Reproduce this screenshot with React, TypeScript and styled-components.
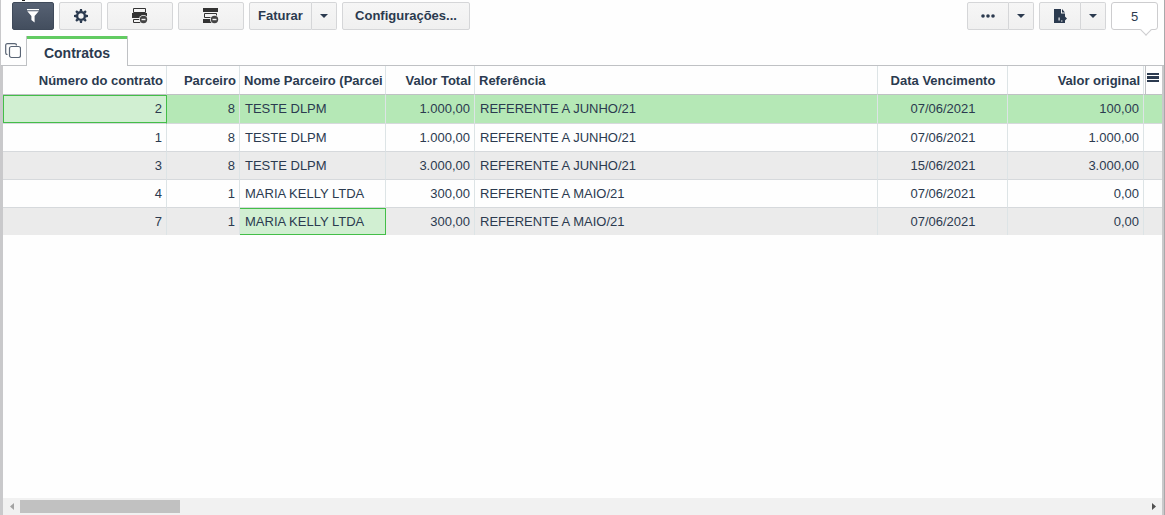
import React from "react";
import styled, { createGlobalStyle, css } from "styled-components";

const ink = "#2b3a4f";
const line = "#bfc1c4";
const cellLine = "#dde4e6";
const green = "#43be48";

const GlobalStyle = createGlobalStyle`
  *, *::before, *::after { box-sizing: border-box; }
  body {
    margin: 0;
    background: #fefefe;
    color: ${ink};
    font: 13px/16px "Liberation Sans", Arial, sans-serif;
  }
`;

const Page = styled.main`
  display: flex;
  flex-direction: column;
  min-height: 100vh;
  border-left: 1px solid #c9c9cb;
  border-right: 1px solid #a9a9ab;
`;

const Toolbar = styled.header`
  position: relative;
  display: flex;
  justify-content: space-between;
  padding: 2px 6px 6px 11px;

  &::before {
    content: "";
    position: absolute;
    top: 0;
    left: 21px;
    width: 3px;
    height: 1px;
    background: #222;
  }
`;

const Group = styled.div`
  display: flex;
  gap: 5px;
`;

const Split = styled.div`
  display: flex;
`;

const Button = styled.button<{ $width: number; $side?: "left" | "right"; $dark?: boolean }>`
  display: flex;
  align-items: center;
  justify-content: center;
  width: ${(p) => p.$width}px;
  height: 28px;
  padding: 0;
  border: 1px solid #d5d6d8;
  border-radius: 2px;
  background: linear-gradient(#f6f6f6, #f0f0f0);
  color: ${ink};
  font: bold 13px/16px "Liberation Sans", Arial, sans-serif;
  cursor: pointer;

  ${(p) => p.$side === "left" && css`border-radius: 2px 0 0 2px;`}
  ${(p) => p.$side === "right" && css`
    border-left: 0;
    border-radius: 0 2px 2px 0;
  `}
  ${(p) => p.$dark && css`
    border-color: #3f4a5a;
    background: linear-gradient(#566173, #434e5e);
    color: #fff;
  `}
`;

const Count = styled.output`
  position: relative;
  width: 47px;
  height: 28px;
  border: 1px solid #cdcdcf;
  border-radius: 3px;
  background: #fff;
  line-height: 27px;
  text-align: center;

  &::after {
    content: "";
    position: absolute;
    right: 7px;
    bottom: -5px;
    width: 8px;
    height: 8px;
    border: solid #cdcdcf;
    border-width: 0 1px 1px 0;
    background: #fff;
    transform: rotate(45deg);
  }
`;

const Tabs = styled.nav`
  display: flex;
  height: 30px;
  border-bottom: 1px solid ${line};
`;

const CopyButton = styled.button`
  display: flex;
  align-items: center;
  justify-content: center;
  width: 25px;
  padding: 0 2px 0 0;
  border: 0;
  background: none;
  color: #5a6575;
`;

const Tab = styled.button`
  width: 102px;
  height: 30px;
  padding: 3px 0 0;
  border: solid ${line};
  border-width: 0 1px;
  background: linear-gradient(#62cb62 3px, #fefefe 3px);
  color: ${ink};
  font: bold 14px/16px "Liberation Sans", Arial, sans-serif;
`;

const Grid = styled.section`
  display: flex;
  flex: 1;
  flex-direction: column;
  border-left: 2px solid #c9c9cb;
  border-right: 2px solid #c9c9cb;
`;

const Table = styled.table`
  width: 100%;
  border-collapse: separate;
  border-spacing: 0;
  table-layout: fixed;
`;

type Align = "left" | "center" | "right";

const HeadCell = styled.th<{ $align: Align }>`
  height: 29px;
  padding: 2px 3px 0 4px;
  overflow: hidden;
  border-right: 1px solid ${cellLine};
  border-bottom: 1px solid ${line};
  text-align: ${(p) => p.$align};
  white-space: nowrap;
`;

const MenuCell = styled.th`
  padding: 0 0 0 1px;
  border-bottom: 1px solid ${line};
`;

const MenuButton = styled.button`
  display: flex;
  justify-content: center;
  width: 100%;
  height: 28px;
  padding: 0 2px 4px 0;
  align-items: center;
  border: 0;
  border-left: 1px solid ${line};
  background: none;
  color: ${ink};
`;

const Row = styled.tr<{ $active: boolean }>`
  height: ${(p) => (p.$active ? 29 : 28)}px;
  background: ${(p) => (p.$active ? "#b5e8b6" : "#fefefe")};

  &:nth-child(odd) {
    background: ${(p) => (p.$active ? "#b5e8b6" : "#ebebeb")};
  }
  &:last-child {
    height: 27px;
  }
  &:last-child td {
    border-bottom: 0;
  }
`;

const Cell = styled.td<{ $align: Align; $marked?: boolean }>`
  padding: 0 4px 0 5px;
  overflow: hidden;
  border-right: 1px solid ${cellLine};
  border-bottom: 1px solid #d6d9dc;
  text-align: ${(p) => p.$align};
  white-space: nowrap;

  &:last-child {
    border-right: 0;
  }
  ${(p) => p.$marked && css`
    border-right-color: ${green};
    background: #d1efd2;
    box-shadow: inset 0 1px ${green}, inset 0 -1px ${green};

    &:first-child {
      box-shadow: inset 1px 1px ${green}, inset 0 -1px ${green};
    }
  `}
`;

const Scrollbar = styled.div`
  display: flex;
  align-items: center;
  height: 17px;
  margin-top: auto;
  background: #f1f1f1;
`;

const Arrow = styled.button`
  display: flex;
  align-items: center;
  justify-content: center;
  width: 17px;
  height: 17px;
  padding: 0;
  border: 0;
  background: none;
`;

const Track = styled.div`
  flex: 1;
`;

const Thumb = styled.div`
  width: 160px;
  height: 13px;
  background: #c1c1c1;
`;

const Caret = () => (
  <svg width="8" height="4" viewBox="0 0 8 4" aria-hidden="true">
    <path d="M0 0h8L4 4z" fill="currentColor" />
  </svg>
);

const FilterIcon = () => (
  <svg width="14" height="14" viewBox="0 0 14 14" fill="currentColor" aria-hidden="true">
    <path d="M1 0h12v1.3H1zM1.3 2.2h11.4L8.6 7v6.6L5.4 11V7z" />
  </svg>
);

const GearIcon = () => (
  <svg width="14" height="14" viewBox="0 0 14 14" aria-hidden="true">
    <circle cx="7" cy="7" r="3.9" fill="none" stroke="currentColor" strokeWidth="2.4" />
    {[0, 45, 90, 135, 180, 225, 270, 315].map((angle) => (
      <path key={angle} d="M6 0h2l.4 2.4H5.6z" fill="currentColor" transform={`rotate(${angle} 7 7)`} />
    ))}
  </svg>
);

const MinusBadge = () => (
  <>
    <circle cx="11.5" cy="11.5" r="4.5" fill="#f3f3f3" />
    <circle cx="11.5" cy="11.5" r="3.7" fill="#444" />
    <path d="M9.5 11.5h4" stroke="#f3f3f3" strokeWidth="1.4" />
  </>
);

const RemoveLineIcon = () => (
  <svg width="16" height="16" viewBox="0 0 16 16" aria-hidden="true">
    <path d="M1.5.5h12v4h-12zM1.5 11.5h12v3h-12z" fill="none" stroke="#333" />
    <path d="M0 5h15v5H0z" fill="#333" />
    <MinusBadge />
  </svg>
);

const RemoveHeadIcon = () => (
  <svg width="16" height="16" viewBox="0 0 16 16" aria-hidden="true">
    <path d="M0 0h15v4H0zM0 11h10v4H0z" fill="#333" />
    <path d="M1.5 5.5h12v4h-12z" fill="none" stroke="#333" />
    <MinusBadge />
  </svg>
);

const DotsIcon = () => (
  <svg width="14" height="4" viewBox="0 0 14 4" fill="currentColor" aria-hidden="true">
    <circle cx="2" cy="2" r="1.8" />
    <circle cx="7" cy="2" r="1.8" />
    <circle cx="12" cy="2" r="1.8" />
  </svg>
);

const ExportIcon = () => (
  <svg width="13" height="14" viewBox="0 0 13 14" aria-hidden="true">
    <path d="M0 0h7v4.5h4V14H0z" fill="currentColor" />
    <path d="M8 0l3 3.5H8z" fill="currentColor" />
    <path d="M4.5 8.5h1.2v3H4.5z" fill="#f3f3f3" />
    <path d="M6.6 8.2h2.6V5.8L13 9.6l-3.8 3.6v-2.4H6.6z" fill="currentColor" />
    <path d="M7 11.6h1.4v1H7zM11.2 5.2v1.4l1.8 1.7V5zM11.2 12.6v1.4H13v-3z" fill="#f3f3f3" />
  </svg>
);

const CopyIcon = () => (
  <svg width="16" height="16" viewBox="0 0 16 16" fill="none" stroke="currentColor" aria-hidden="true">
    <rect x="4.5" y="3.5" width="11" height="11" rx="2" strokeWidth="1.2" />
    <path d="M2.5 11.5C1.2 11.5.7 10.8.7 9.5v-7C.7 1.2 1.2.7 2.5.7h7c1.3 0 2 .5 2 1.8" strokeWidth="1.2" />
  </svg>
);

const MenuIcon = () => (
  <svg width="12" height="10" viewBox="0 0 12 10" fill="currentColor" aria-hidden="true">
    <path d="M0 0h12v2H0zM0 3h12v3H0zM0 7h12v2H0z" />
  </svg>
);

const columns: { title: string; align: Align; width?: number }[] = [
  { title: "Número do contrato", align: "right", width: 164 },
  { title: "Parceiro", align: "right", width: 73 },
  { title: "Nome Parceiro (Parcei", align: "left", width: 146 },
  { title: "Valor Total", align: "right", width: 89 },
  { title: "Referência", align: "left" },
  { title: "Data Vencimento", align: "center", width: 130 },
  { title: "Valor original", align: "right", width: 136 },
];

const rows = [
  ["2", "8", "TESTE DLPM", "1.000,00", "REFERENTE A JUNHO/21", "07/06/2021", "100,00"],
  ["1", "8", "TESTE DLPM", "1.000,00", "REFERENTE A JUNHO/21", "07/06/2021", "1.000,00"],
  ["3", "8", "TESTE DLPM", "3.000,00", "REFERENTE A JUNHO/21", "15/06/2021", "3.000,00"],
  ["4", "1", "MARIA KELLY LTDA", "300,00", "REFERENTE A MAIO/21", "07/06/2021", "0,00"],
  ["7", "1", "MARIA KELLY LTDA", "300,00", "REFERENTE A MAIO/21", "07/06/2021", "0,00"],
];

const isMarked = (row: number, column: number) =>
  (row === 0 && column === 0) || (row === 4 && column === 2);

export default function App() {
  return (
    <>
      <GlobalStyle />
      <Page>
        <Toolbar>
          <Group>
            <Button $width={42} $dark aria-label="Filtro"><FilterIcon /></Button>
            <Button $width={43} aria-label="Opções"><GearIcon /></Button>
            <Button $width={66} aria-label="Remover linha"><RemoveLineIcon /></Button>
            <Button $width={66} aria-label="Remover cabeçalho"><RemoveHeadIcon /></Button>
            <Split>
              <Button $width={63} $side="left">Faturar</Button>
              <Button $width={25} $side="right" aria-label="Mais opções de faturar"><Caret /></Button>
            </Split>
            <Button $width={128}>Configurações...</Button>
          </Group>
          <Group>
            <Split>
              <Button $width={42} $side="left" aria-label="Mais"><DotsIcon /></Button>
              <Button $width={25} $side="right" aria-label="Abrir menu"><Caret /></Button>
            </Split>
            <Split>
              <Button $width={42} $side="left" aria-label="Exportar"><ExportIcon /></Button>
              <Button $width={25} $side="right" aria-label="Opções de exportação"><Caret /></Button>
            </Split>
            <Count>5</Count>
          </Group>
        </Toolbar>
        <Tabs>
          <CopyButton aria-label="Copiar"><CopyIcon /></CopyButton>
          <Tab>Contratos</Tab>
        </Tabs>
        <Grid>
          <Table>
            <colgroup>
              {columns.map((c) => <col key={c.title} width={c.width} />)}
              <col width={18} />
            </colgroup>
            <thead>
              <tr>
                {columns.map((c) => (
                  <HeadCell key={c.title} $align={c.align} scope="col">{c.title}</HeadCell>
                ))}
                <MenuCell><MenuButton aria-label="Colunas"><MenuIcon /></MenuButton></MenuCell>
              </tr>
            </thead>
            <tbody>
              {rows.map((row, r) => (
                <Row key={row[0]} $active={r === 0}>
                  {row.map((value, c) => (
                    <Cell key={c} $align={columns[c].align} $marked={isMarked(r, c)}>{value}</Cell>
                  ))}
                  <Cell $align="left" />
                </Row>
              ))}
            </tbody>
          </Table>
          <Scrollbar>
            <Arrow aria-label="Rolar para a esquerda">
              <svg width="4" height="7" viewBox="0 0 4 7"><path d="M4 0v7L0 3.5z" fill="#a3a3a3" /></svg>
            </Arrow>
            <Track><Thumb /></Track>
            <Arrow aria-label="Rolar para a direita">
              <svg width="4" height="7" viewBox="0 0 4 7"><path d="M0 0v7l4-3.5z" fill="#505050" /></svg>
            </Arrow>
          </Scrollbar>
        </Grid>
      </Page>
    </>
  );
}
